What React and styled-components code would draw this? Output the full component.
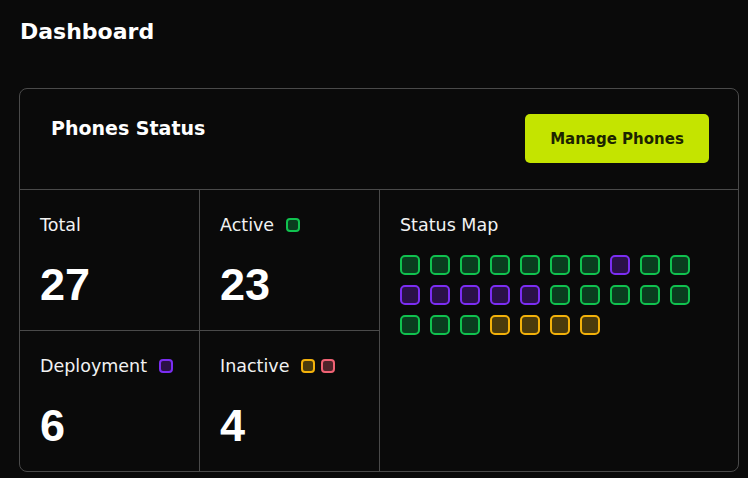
import React from "react";
import styled, { createGlobalStyle } from "styled-components";

const GlobalStyle = createGlobalStyle`
    body {
        margin: 0;
        background: #0a0a0a;
        color: #f5f5f5;
        font-family: "DejaVu Sans", "Liberation Sans", sans-serif;
    }
`;

const COLORS = {
    green: { border: "#10c24f", fill: "#0a3d1f" },
    purple: { border: "#7b2df2", fill: "#2b1148" },
    yellow: { border: "#f3b10a", fill: "#4a3a0c" },
    red: { border: "#f06274", fill: "#4d2329" },
};

const statusMap = [
    "green", "green", "green", "green", "green", "green", "green", "purple", "green", "green",
    "purple", "purple", "purple", "purple", "purple", "green", "green", "green", "green", "green",
    "green", "green", "green", "yellow", "yellow", "yellow", "yellow",
];

const stats = [
    { label: "Total", value: 27, dots: [] },
    { label: "Active", value: 23, dots: ["green"] },
    { label: "Deployment", value: 6, dots: ["purple"] },
    { label: "Inactive", value: 4, dots: ["yellow", "red"] },
];

export default function App() {
    return (
        <Page>
            <GlobalStyle />
            <Title>Dashboard</Title>
            <Card>
                <CardHeader>
                    <CardTitle>Phones Status</CardTitle>
                    <ManageButton>Manage Phones</ManageButton>
                </CardHeader>
                <CardBody>
                    <StatsGrid>
                        {stats.map((s) => (
                            <StatCell key={s.label}>
                                <Label>
                                    {s.label}
                                    {s.dots.length > 0 && (
                                        <Dots>
                                            {s.dots.map((d, i) => (
                                                <Square key={i} status={d} size={14} />
                                            ))}
                                        </Dots>
                                    )}
                                </Label>
                                <Value>{s.value}</Value>
                            </StatCell>
                        ))}
                    </StatsGrid>
                    <MapPanel>
                        <Label>Status Map</Label>
                        <MapGrid>
                            {statusMap.map((st, i) => (
                                <Square key={i} status={st} size={20} />
                            ))}
                        </MapGrid>
                    </MapPanel>
                </CardBody>
            </Card>
        </Page>
    );
}

const Page = styled.div`
    padding: 18px 9px 7px 19px;
`;

const Title = styled.h1`
    margin: 0 0 0 1px;
    font-size: 22px;
    font-weight: 700;
    line-height: 28px;
    color: #ffffff;
`;

const Card = styled.div`
    margin-top: 42px;
    border: 1px solid #4a4a4a;
    border-radius: 8px;
`;

const CardHeader = styled.div`
    display: flex;
    justify-content: space-between;
    align-items: flex-start;
    height: 101px;
    padding: 25px 29px 0 31px;
    box-sizing: border-box;
    border-bottom: 1px solid #4a4a4a;
`;

const CardTitle = styled.h2`
    margin: 2px 0 0;
    font-size: 19px;
    font-weight: 700;
    line-height: 24px;
    color: #ffffff;
`;

const ManageButton = styled.button`
    width: 184px;
    height: 49px;
    border: none;
    border-radius: 5px;
    background: #c4e400;
    color: #1c2400;
    font-family: "DejaVu Sans", "Liberation Sans", sans-serif;
    font-size: 15px;
    font-weight: 700;
    cursor: pointer;
`;

const CardBody = styled.div`
    display: flex;
`;

const StatsGrid = styled.div`
    display: grid;
    grid-template-columns: 180px 180px;
    grid-template-rows: 141px 140px;
`;

const StatCell = styled.div`
    padding: 25px 20px 0;
    border-right: 1px solid #4a4a4a;
    &:nth-child(-n + 2) {
        border-bottom: 1px solid #4a4a4a;
    }
`;

const Label = styled.div`
    display: flex;
    align-items: center;
    gap: 12px;
    font-size: 17.5px;
    line-height: 20px;
    color: #f2f2f2;
`;

const Dots = styled.span`
    display: inline-flex;
    gap: 6px;
`;

const Square = styled.span`
    display: block;
    box-sizing: border-box;
    width: ${(p) => p.size}px;
    height: ${(p) => p.size}px;
    border: 2px solid ${(p) => COLORS[p.status].border};
    background: ${(p) => COLORS[p.status].fill};
    border-radius: ${(p) => (p.size > 16 ? 5 : 4)}px;
`;

const Value = styled.div`
    margin-top: 24px;
    font-family: "Liberation Sans", sans-serif;
    font-size: 45px;
    font-weight: 700;
    line-height: 52px;
    color: #ffffff;
`;

const MapPanel = styled.div`
    flex: 1;
    padding: 25px 20px 0;
`;

const MapGrid = styled.div`
    display: grid;
    grid-template-columns: repeat(10, 20px);
    gap: 10px;
    margin-top: 20px;
`;
